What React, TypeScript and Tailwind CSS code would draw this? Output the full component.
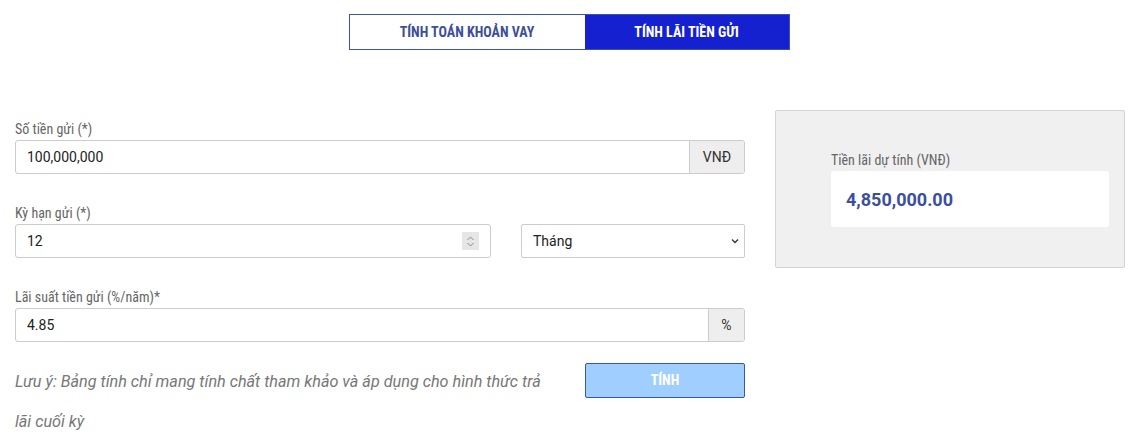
import React from 'react'

const narrow = "font-['Liberation_Sans_Narrow','Roboto_Condensed',Roboto,sans-serif]"

function Label({ children }: { children: React.ReactNode }) {
  return <div className={`${narrow} mb-[2px] text-[14px] leading-[17px] text-[#666]`}>{children}</div>
}

function Spinner() {
  return (
    <div className="flex h-[18px] w-[17px] flex-col items-center justify-center bg-[#e6e6e6]">
      <svg width="9" height="13" viewBox="0 0 9 13" fill="none" stroke="#8a8a8a" strokeWidth="1">
        <path d="M1.5 5 L4.5 2 L7.5 5" />
        <path d="M1.5 8 L4.5 11 L7.5 8" />
      </svg>
    </div>
  )
}

export default function App() {
  return (
    <div className="min-h-[446px] bg-white font-['Roboto',sans-serif] text-[#222]">
      <div className="flex justify-center pt-[14px] pr-[5px]">
        <div className="flex h-[36px] border border-[#3a54a8]">
          <button className={`${narrow} w-[235px] bg-white text-[14px] font-bold uppercase text-[#3d4f9a]`}>
            Tính toán khoản vay
          </button>
          <button className={`${narrow} w-[204px] bg-[#1520d0] text-[14px] font-bold uppercase text-white`}>
            Tính lãi tiền gửi
          </button>
        </div>
      </div>

      <div className="mt-[60px] flex gap-[30px] pl-[15px]">
        <div className="w-[730px] pt-[11px]">
          <Label>Số tiền gửi (*)</Label>
          <div className="flex h-[34px] rounded-[3px] border border-[#ccc]">
            <div className="flex flex-1 items-center pl-[11px] text-[14px]">100,000,000</div>
            <div className="flex w-[55px] items-center justify-center rounded-r-[3px] border-l border-[#ccc] bg-[#eee] text-[14px] text-[#333]">
              VNĐ
            </div>
          </div>

          <div className="mt-[31px]">
            <Label>Kỳ hạn gửi (*)</Label>
            <div className="flex gap-[30px]">
              <div className="flex h-[34px] w-[476px] items-center justify-between rounded-[3px] border border-[#ccc] pl-[11px] pr-[11px] text-[14px]">
                <span>12</span>
                <Spinner />
              </div>
              <div className="flex h-[34px] flex-1 items-center justify-between rounded-[2px] border border-[#ccc] pl-[11px] pr-[4px] text-[14px]">
                <span>Tháng</span>
                <svg width="10" height="10" viewBox="0 0 10 10" fill="none" stroke="#333" strokeWidth="1.3">
                  <path d="M2 3.5 L5 6.5 L8 3.5" />
                </svg>
              </div>
            </div>
          </div>

          <div className="mt-[31px]">
            <Label>Lãi suất tiền gửi (%/năm)*</Label>
            <div className="flex h-[34px] rounded-[3px] border border-[#ccc]">
              <div className="flex flex-1 items-center pl-[11px] text-[14px]">4.85</div>
              <div className="flex w-[36px] items-center justify-center rounded-r-[3px] border-l border-[#ccc] bg-[#eee] text-[14px] text-[#333]">
                %
              </div>
            </div>
          </div>

          <div className="mt-[20px] flex items-start justify-between">
            <p className="w-[532px] text-[16.2px] italic leading-[40px] text-[#777]">
              Lưu ý: Bảng tính chỉ mang tính chất tham khảo và áp dụng cho hình thức trả lãi cuối kỳ
            </p>
            <button className={`${narrow} mt-[1px] h-[35px] w-[160px] rounded-[2px] border border-[#3a54a8] bg-[#a0cfff] text-[14px] font-bold uppercase text-white`}>
              Tính
            </button>
          </div>
        </div>

        <div className="h-[158px] w-[350px] rounded-[2px] border border-[#d4d4d4] bg-[#f0f0f0] pl-[55px] pr-[15px] pt-[41px]">
          <Label>Tiền lãi dự tính (VNĐ)</Label>
          <div className="flex h-[56px] items-center rounded-[3px] bg-white pl-[15px] text-[18px] font-bold text-[#3a4f9e]">
            4,850,000.00
          </div>
        </div>
      </div>
    </div>
  )
}
